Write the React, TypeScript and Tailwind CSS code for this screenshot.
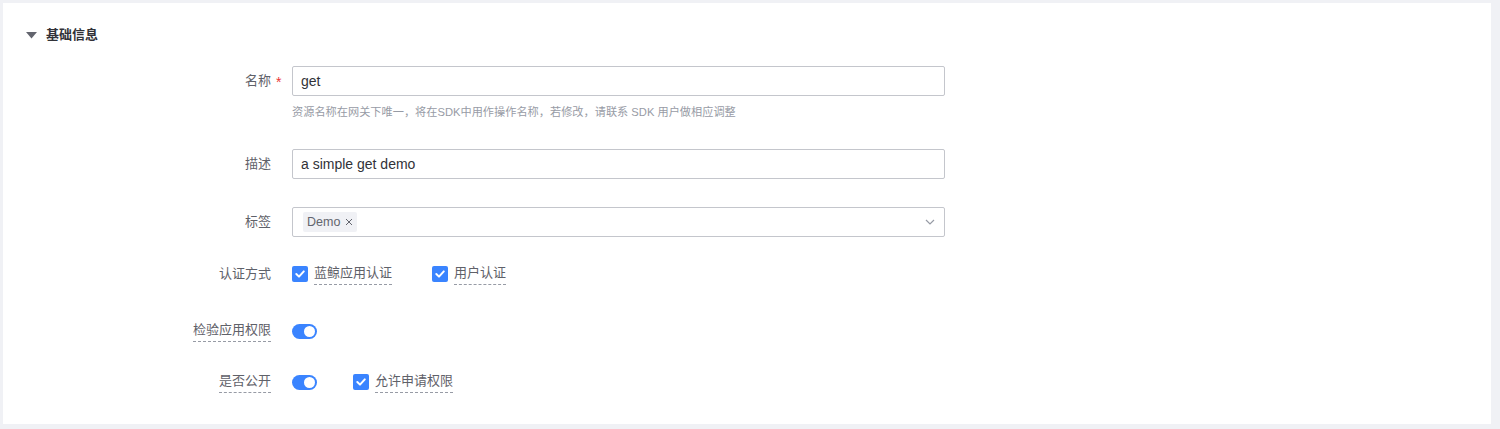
import React from "react";

const font = { fontFamily: '"Liberation Sans", "Noto Sans CJK SC", sans-serif' };

function Label({ children, dashed = false, required = false }: { children: React.ReactNode; dashed?: boolean; required?: boolean }) {
  return (
    <div className="w-[268px] shrink-0 flex justify-end items-center h-[30px] relative">
      <span className={"text-[13px] text-[#5f6169] leading-[20px] " + (dashed ? "border-b border-dashed border-[#979ba5] pb-[1px]" : "")}>
        {children}
      </span>
      {required && <span className="absolute left-[273px] top-[6px] text-[14px] leading-[20px] text-[#ea3636]">*</span>}
    </div>
  );
}

function Check({ children }: { children: React.ReactNode }) {
  return (
    <div className="flex items-center">
      <span className="w-[16px] h-[16px] rounded-[2px] bg-[#3a84ff] flex items-center justify-center">
        <svg width="12" height="12" viewBox="0 0 12 12" fill="none">
          <path d="M2.3 6 L5 8.6 L9.8 3.4" stroke="white" strokeWidth="2" strokeLinecap="round" strokeLinejoin="round" />
        </svg>
      </span>
      <span className="ml-[6px] text-[13px] leading-[20px] pb-[1px] text-[#5f6169] border-b border-dashed border-[#979ba5]">{children}</span>
    </div>
  );
}

function Switch() {
  return (
    <span className="w-[25px] h-[15px] rounded-full bg-[#3a84ff] flex items-center justify-end pr-[2px]">
      <span className="w-[11px] h-[11px] rounded-full bg-white" />
    </span>
  );
}

export default function App() {
  return (
    <div className="w-[1500px] h-[429px] bg-[#f0f1f5] pt-[3px] pl-[3px]" style={font}>
      <div className="w-[1488px] h-[421px] bg-white pt-[22px]">
        <div className="flex items-center h-[20px] pl-[23px]">
          <svg width="11" height="7" viewBox="0 0 11 7">
            <path d="M0 0 L11 0 L5.5 6.5 Z" fill="#63656e" />
          </svg>
          <span className="ml-[9px] text-[13px] font-bold text-[#313238] leading-[20px]">基础信息</span>
        </div>

        <div className="flex mt-[21px]">
          <Label required>名称</Label>
          <div className="ml-[21px] w-[653px]">
            <div className="h-[30px] border border-[#c4c6cc] rounded-[2px] px-[8px] flex items-center text-[14px] text-[#313238]">get</div>
            <div className="mt-[6px] text-[11.2px] leading-[20px] text-[#979ba5]">资源名称在网关下唯一，将在SDK中用作操作名称，若修改，请联系 SDK 用户做相应调整</div>
          </div>
        </div>

        <div className="flex mt-[27px]">
          <Label>描述</Label>
          <div className="ml-[21px] w-[653px] h-[30px] border border-[#c4c6cc] rounded-[2px] px-[8px] flex items-center text-[14px] text-[#313238]">a simple get demo</div>
        </div>

        <div className="flex mt-[28px]">
          <Label>标签</Label>
          <div className="ml-[21px] w-[653px] h-[30px] border border-[#c4c6cc] rounded-[2px] pl-[10px] pr-[9px] flex items-center justify-between">
            <span className="h-[20px] bg-[#f0f1f5] rounded-[2px] px-[4px] flex items-center text-[12.5px] text-[#63656e]">
              Demo
              <svg className="ml-[5px]" width="8" height="8" viewBox="0 0 8 8">
                <path d="M1 1 L7 7 M7 1 L1 7" stroke="#63656e" strokeWidth="1" />
              </svg>
            </span>
            <svg width="10" height="6" viewBox="0 0 10 6" fill="none">
              <path d="M1 1 L5 5 L9 1" stroke="#979ba5" strokeWidth="1.2" />
            </svg>
          </div>
        </div>

        <div className="flex mt-[22px] items-center">
          <Label>认证方式</Label>
          <div className="ml-[21px] flex items-center">
            <Check>蓝鲸应用认证</Check>
            <div className="ml-[40px]">
              <Check>用户认证</Check>
            </div>
          </div>
        </div>

        <div className="flex mt-[27px] items-center">
          <Label dashed>检验应用权限</Label>
          <div className="ml-[21px] flex items-center">
            <Switch />
          </div>
        </div>

        <div className="flex mt-[21px] items-center">
          <Label dashed>是否公开</Label>
          <div className="ml-[21px] flex items-center">
            <Switch />
            <div className="ml-[36px]">
              <Check>允许申请权限</Check>
            </div>
          </div>
        </div>
      </div>
    </div>
  );
}
